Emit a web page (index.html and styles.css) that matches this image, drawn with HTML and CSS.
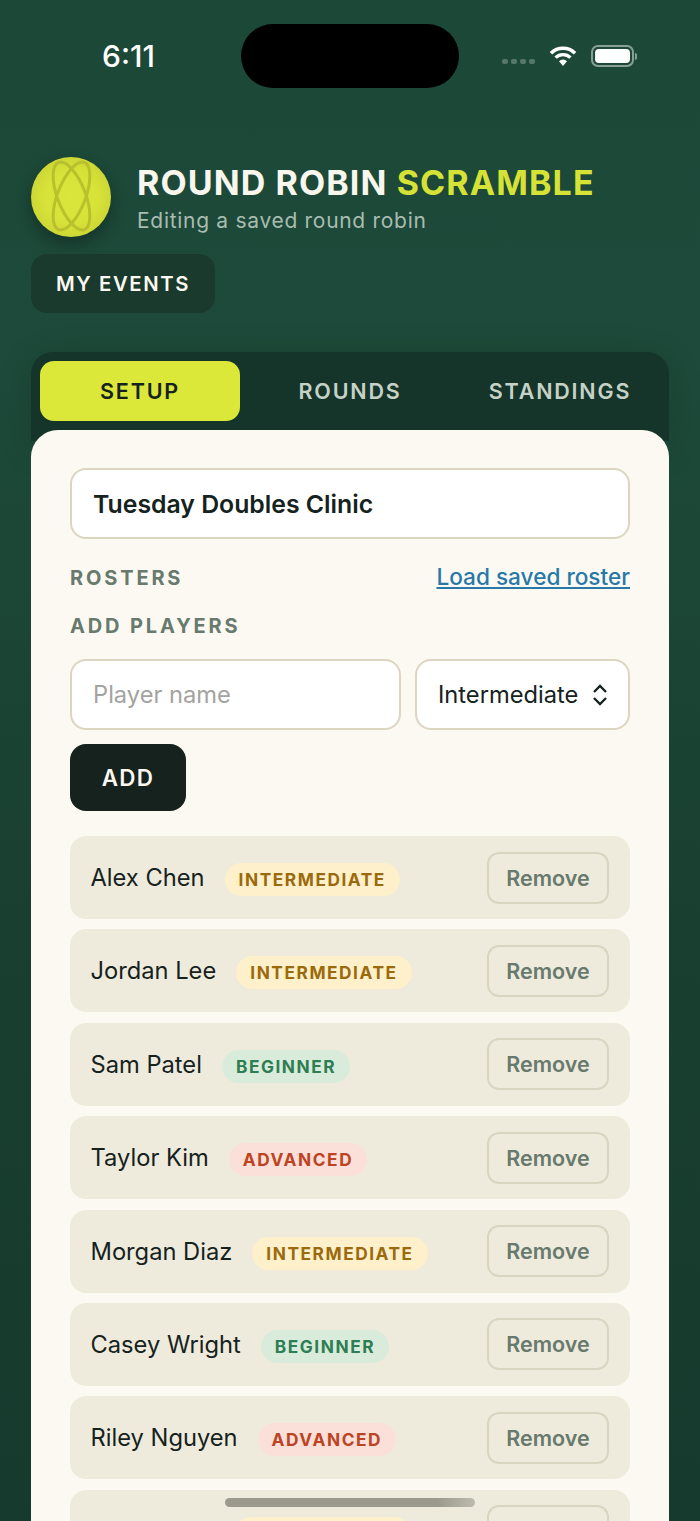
FILE: index.html
```html
<!DOCTYPE html>
<html lang="en">
<head>
  <meta charset="UTF-8">
  <meta name="viewport" content="width=device-width, initial-scale=1.0">
  <title>Round Robin Scramble</title>
  <link rel="stylesheet" href="styles.css">
</head>
<body>
  <div class="status-bar">
    <span class="time">6:11</span>
    <div class="island"></div>
    <div class="status-icons">
      <div class="signal"><i></i><i></i><i></i><i></i></div>
      <svg class="wifi" width="30" height="22" viewBox="0 0 30 22">
        <path d="M3 8.2 A17 17 0 0 1 27 8.2" fill="none" stroke="#fff" stroke-width="3.6"/>
        <path d="M7.6 12.6 A10.6 10.6 0 0 1 22.4 12.6" fill="none" stroke="#fff" stroke-width="3.4"/>
        <path d="M11 16.2 A5.8 5.8 0 0 1 19 16.2 L15 21 Z" fill="#fff"/>
      </svg>
      <div class="battery"><div class="battery-fill"></div></div>
      <div class="battery-cap"></div>
    </div>
  </div>

  <header class="app-header">
    <div class="logo">
      <svg width="80" height="80" viewBox="0 0 80 80">
        <g fill="none" stroke="#b3bb2c" stroke-width="3" opacity="0.85">
          <ellipse cx="40.5" cy="39" rx="14" ry="36" transform="rotate(-21 40.5 39)"/>
          <ellipse cx="40.5" cy="39" rx="14" ry="36" transform="rotate(21 40.5 39)"/>
        </g>
      </svg>
    </div>
    <div class="title-block">
      <h1>ROUND ROBIN <span class="accent">SCRAMBLE</span></h1>
      <p>Editing a saved round robin</p>
    </div>
  </header>

  <button class="events-btn">MY EVENTS</button>

  <nav class="tabs">
    <button class="tab active">SETUP</button>
    <button class="tab">ROUNDS</button>
    <button class="tab">STANDINGS</button>
  </nav>

  <main class="card">
    <div class="event-name">Tuesday Doubles Clinic</div>

    <div class="section-head">
      <span class="label">ROSTERS</span>
      <a class="load-link" href="#">Load saved roster</a>
    </div>
    <div class="label add-label">ADD PLAYERS</div>

    <div class="add-row">
      <div class="field name-field">Player name</div>
      <div class="field level-field">
        <span>Intermediate</span>
        <svg width="16" height="22" viewBox="0 0 16 22">
          <path d="M2 8 L8 2 L14 8 M2 14 L8 20 L14 14" fill="none" stroke="#15221d" stroke-width="2.3"/>
        </svg>
      </div>
    </div>
    <button class="add-btn">ADD</button>

    <div class="players">
      <div class="player"><span class="name">Alex Chen</span><span class="badge mid">INTERMEDIATE</span><button class="remove">Remove</button></div>
      <div class="player"><span class="name">Jordan Lee</span><span class="badge mid">INTERMEDIATE</span><button class="remove">Remove</button></div>
      <div class="player"><span class="name">Sam Patel</span><span class="badge beg">BEGINNER</span><button class="remove">Remove</button></div>
      <div class="player"><span class="name">Taylor Kim</span><span class="badge adv">ADVANCED</span><button class="remove">Remove</button></div>
      <div class="player"><span class="name">Morgan Diaz</span><span class="badge mid">INTERMEDIATE</span><button class="remove">Remove</button></div>
      <div class="player"><span class="name">Casey Wright</span><span class="badge beg">BEGINNER</span><button class="remove">Remove</button></div>
      <div class="player"><span class="name">Riley Nguyen</span><span class="badge adv">ADVANCED</span><button class="remove">Remove</button></div>
      <!-- this row is cut by the bottom of the screen, its text is out of view -->
      <div class="player"><span class="name name-blank"></span><span class="badge mid badge-blank"></span><button class="remove"></button></div>
    </div>
  </main>

  <div class="home-bar"></div>
</body>
</html>
```

FILE: styles.css
```css
* {
  margin: 0;
  padding: 0;
  box-sizing: border-box;
}

html, body {
  height: 1521px;
  overflow: hidden;
}

body {
  position: relative;
  display: flex;
  flex-direction: column;
  font-family: 'Inter', sans-serif;
  color: #15221d;
  padding: 24px 31px 0;
  background: linear-gradient(180deg, #1c4838 0, #1d4a3a 25%, #193f30 60%, #163b2e 100%);
}

button {
  font-family: inherit;
  border: none;
}

/* status bar */
.status-bar {
  display: flex;
  align-items: center;
  flex: none;
  height: 64px;
  padding-left: 71px;
}

.time {
  width: 139px;
  font-size: 30px;
  font-weight: 500;
  color: #fff;
}

.island {
  width: 218px;
  height: 64px;
  border-radius: 32px;
  background: #000;
}

.status-icons {
  display: flex;
  align-items: center;
  width: 210px;
  padding-left: 43px;
}

.signal {
  display: flex;
  gap: 3px;
  margin: 11px 13px 0 0;
}

.signal i {
  width: 6px;
  height: 5.5px;
  border-radius: 2px;
  background: #55786a;
}

.wifi {
  margin-right: 13px;
}

.battery {
  flex: none;
  width: 43px;
  height: 22px;
  padding: 2px;
  border: 2px solid #87a196;
  border-radius: 7px;
}

.battery-fill {
  height: 100%;
  border-radius: 4px;
  background: #fff;
}

.battery-cap {
  width: 2px;
  height: 7px;
  margin-left: 1px;
  border-radius: 0 2px 2px 0;
  background: #87a196;
}

/* header */
.app-header {
  display: flex;
  align-items: center;
  flex: none;
  gap: 26px;
  margin-top: 69px;
}

.logo {
  width: 80px;
  height: 80px;
  border-radius: 50%;
  overflow: hidden;
  background: radial-gradient(circle at 50% 50%, #dbe63c 0, #d8e33a 45%, #c9d233 82%, #aab12a 100%);
  box-shadow: 0 7px 16px rgba(0, 0, 0, 0.3);
}

.title-block {
  margin-top: 3px;
}

h1 {
  font-size: 34px;
  line-height: 40px;
  font-weight: 700;
  letter-spacing: 1.1px;
  color: #f9f6ee;
}

.accent {
  color: #d6e235;
}

.title-block p {
  margin-top: 4px;
  font-size: 21px;
  line-height: 27px;
  letter-spacing: 0.7px;
  color: #a9bcb0;
}

.events-btn {
  display: block;
  flex: none;
  width: 184px;
  height: 59px;
  margin-top: 17px;
  border-radius: 16px;
  background: #1a3a2d;
  color: #fbf8f1;
  font-size: 20.3px;
  font-weight: 600;
  letter-spacing: 1.6px;
}

/* tabs */
.tabs {
  display: flex;
  flex: none;
  gap: 10px;
  height: 89px;
  margin-top: 39px;
  padding: 9px;
  border-radius: 22px 22px 0 0;
  background: #15342a;
  box-shadow: 0 8px 36px rgba(0, 0, 0, 0.15);
}

.tab {
  flex: 1;
  height: 60px;
  border-radius: 14px;
  background: none;
  color: #c6d2c6;
  font-size: 21.5px;
  font-weight: 600;
  letter-spacing: 1.8px;
}

.tab.active {
  background: #dbe739;
  color: #15221d;
}

/* card */
.card {
  flex: 1;
  position: relative;
  overflow: hidden;
  margin-top: -11px;
  padding: 38px 39px 0;
  border-radius: 27px 27px 0 0;
  background: #fcf9f2;
}

.event-name {
  display: flex;
  align-items: center;
  height: 71px;
  padding: 0 21px;
  border: 2px solid #dcd5bf;
  border-radius: 16px;
  background: #fff;
  font-size: 24.8px;
  font-weight: 600;
}

.section-head {
  display: flex;
  align-items: center;
  justify-content: space-between;
  margin-top: 26px;
  height: 26px;
}

.label {
  font-size: 20px;
  font-weight: 700;
  letter-spacing: 2.85px;
  color: #687a6e;
}

.add-label {
  margin-top: 22px;
  line-height: 26px;
}

.load-link {
  margin-bottom: 4px;
  font-size: 22.6px;
  font-weight: 500;
  color: #2878a8;
}

.add-row {
  display: flex;
  gap: 14px;
  margin-top: 20px;
}

.field {
  display: flex;
  align-items: center;
  height: 71px;
  padding: 0 21px;
  border: 2px solid #dcd5bf;
  border-radius: 16px;
  background: #fff;
  font-size: 23.7px;
}

.name-field {
  flex: 1;
  color: #a3a3a0;
}

.level-field {
  justify-content: space-between;
  flex: none;
  width: 215px;
  padding-right: 20px;
}

.add-btn {
  display: block;
  width: 116px;
  height: 67px;
  margin-top: 14px;
  border-radius: 16px;
  background: #15221d;
  color: #fbf8f1;
  font-size: 22.4px;
  font-weight: 600;
  letter-spacing: 1.3px;
}

.players {
  display: flex;
  flex-direction: column;
  gap: 10.4px;
  margin-top: 25px;
}

.player {
  display: flex;
  align-items: center;
  flex: none;
  height: 83px;
  padding: 0 21px 0 20.5px;
  border-radius: 16px;
  background: #efebdc;
}

.name {
  font-size: 23.7px;
  margin-right: 20px;
}

.name-blank {
  width: 124px;
}

.badge {
  height: 33px;
  margin-top: 4px;
  padding: 0 14px;
  border-radius: 17px;
  font-size: 17.3px;
  line-height: 33px;
  font-weight: 700;
  letter-spacing: 1.55px;
}

.badge-blank {
  width: 176px;
}

.mid {
  background: #fdf0cb;
  color: #9a6a0c;
}

.beg {
  background: #d9ecdc;
  color: #2f7d52;
}

.adv {
  background: #fbdfd9;
  color: #bd4423;
}

.remove {
  width: 122px;
  height: 52px;
  margin-left: auto;
  border: 2px solid #dad5c0;
  border-radius: 12px;
  background: none;
  color: #687a6e;
  font-size: 21.5px;
  font-weight: 600;
}

.home-bar {
  position: absolute;
  left: 225px;
  bottom: 14px;
  width: 250px;
  height: 9px;
  border-radius: 5px;
  background: linear-gradient(90deg, #9c9a8c, #9c9a8c 85%, #bdbbae);
}
```
